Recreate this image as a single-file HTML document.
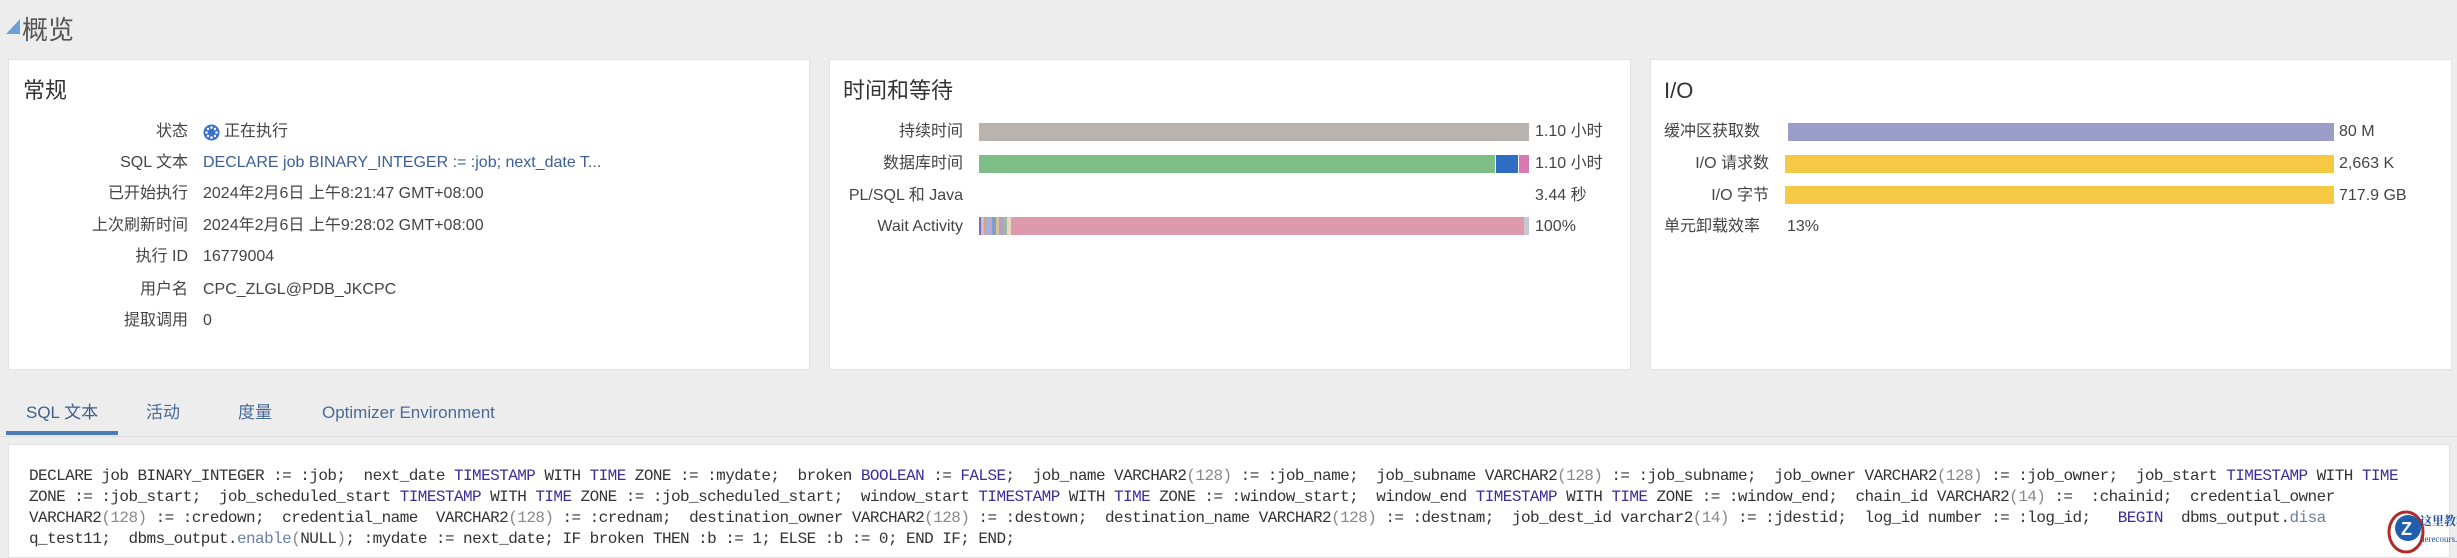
<!DOCTYPE html>
<html><head><meta charset="utf-8"><style>
*{margin:0;padding:0;box-sizing:border-box}
body{width:2457px;height:558px;background:#ededed;font-family:"Liberation Sans","Noto Sans CJK SC",sans-serif;color:#333;position:relative;overflow:hidden}
.a{position:absolute;white-space:nowrap}
.panel{position:absolute;top:59px;height:311px;background:#fff;border:1px solid #e2e2e2}
.t{font-size:22px;line-height:26px;color:#333}
.l{font-size:16px;line-height:20px;text-align:right;color:#444}
.v{font-size:16px;line-height:20px;color:#444}
.bar{position:absolute;height:18px}
.tab{font-size:17px;line-height:20px;top:403px}
.code{font-family:"Liberation Mono","Noto Sans CJK SC",monospace;font-size:16px;line-height:21px;color:#333;white-space:pre;letter-spacing:-0.56px}
.k{color:#3a2d9a}.n{color:#888}.f{color:#6a7fa8}
</style></head><body>
<div class="a" style="left:6px;top:19px;width:0;height:0;border-left:14px solid transparent;border-bottom:15px solid #6aa2d8"></div>
<div class="a" style="left:22px;top:10px;font-size:26px;color:#555">概览</div>

<div class="panel" style="left:8px;width:802px"></div>
<div class="panel" style="left:829px;width:802px"></div>
<div class="panel" style="left:1650px;width:802px"></div>

<div class="a t" style="left:23px;top:78px">常规</div>
<div class="a l" style="left:0;width:188px;top:122px">状态</div>
<div class="a l" style="left:0;width:188px;top:153px">SQL 文本</div>
<div class="a l" style="left:0;width:188px;top:184px">已开始执行</div>
<div class="a l" style="left:0;width:188px;top:216px">上次刷新时间</div>
<div class="a l" style="left:0;width:188px;top:247px">执行 ID</div>
<div class="a l" style="left:0;width:188px;top:280px">用户名</div>
<div class="a l" style="left:0;width:188px;top:311px">提取调用</div>
<svg class="a" style="left:203px;top:124px" width="17" height="17" viewBox="0 0 17 17"><circle cx="8.5" cy="8.5" r="8" fill="#3b6fc9"/><g fill="#fff"><circle cx="8.5" cy="3.5" r="1.3"/><circle cx="8.5" cy="13.5" r="1.3"/><circle cx="3.5" cy="8.5" r="1.3"/><circle cx="13.5" cy="8.5" r="1.3"/><circle cx="5" cy="5" r="1.2"/><circle cx="12" cy="5" r="1.2"/><circle cx="5" cy="12" r="1.2"/><circle cx="12" cy="12" r="1.2"/></g></svg>
<div class="a v" style="left:224px;top:122px">正在执行</div>
<div class="a v" style="left:203px;top:153px;color:#3c5f9a">DECLARE job BINARY_INTEGER := :job; next_date T...</div>
<div class="a v" style="left:203px;top:184px">2024年2月6日 上午8:21:47 GMT+08:00</div>
<div class="a v" style="left:203px;top:216px">2024年2月6日 上午9:28:02 GMT+08:00</div>
<div class="a v" style="left:203px;top:247px">16779004</div>
<div class="a v" style="left:203px;top:280px">CPC_ZLGL@PDB_JKCPC</div>
<div class="a v" style="left:203px;top:311px">0</div>

<div class="a t" style="left:843px;top:78px">时间和等待</div>
<div class="a l" style="left:800px;width:163px;top:122px">持续时间</div>
<div class="a l" style="left:800px;width:163px;top:154px">数据库时间</div>
<div class="a l" style="left:800px;width:163px;top:186px">PL/SQL 和 Java</div>
<div class="a l" style="left:800px;width:163px;top:217px">Wait Activity</div>
<div class="bar" style="left:979px;width:550px;top:123px;background:#b9b3af"></div>
<div class="bar" style="left:979px;width:516px;top:155px;background:#7fbf87"></div>
<div class="bar" style="left:1496px;width:22px;top:155px;background:#2f6dc5"></div>
<div class="bar" style="left:1519px;width:10px;top:155px;background:#d87ab2"></div>
<div class="bar" style="left:979px;width:550px;top:217px;background:linear-gradient(90deg,#7a6fb0 0 2px,#c9b9e0 2px 5px,#e0a070 5px 7px,#9fb5d8 7px 10px,#c8a0c8 10px 13px,#7aa0d0 13px 17px,#d8c090 17px 20px,#b0a0c8 20px 24px,#a0b8a0 24px 28px,#e8d8c0 28px 32px,#dd9aac 32px 545px,#c8c8d0 545px)"></div>
<div class="a v" style="left:1535px;top:122px">1.10 小时</div>
<div class="a v" style="left:1535px;top:154px">1.10 小时</div>
<div class="a v" style="left:1535px;top:186px">3.44 秒</div>
<div class="a v" style="left:1535px;top:217px">100%</div>

<div class="a t" style="left:1664px;top:78px">I/O</div>
<div class="a v" style="left:1664px;top:122px">缓冲区获取数</div>
<div class="a l" style="left:1600px;width:169px;top:154px">I/O 请求数</div>
<div class="a l" style="left:1600px;width:169px;top:186px">I/O 字节</div>
<div class="a v" style="left:1664px;top:217px">单元卸载效率</div>
<div class="bar" style="left:1788px;width:546px;top:123px;background:#9b9dc9"></div>
<div class="bar" style="left:1785px;width:549px;top:155px;background:#f6c944"></div>
<div class="bar" style="left:1785px;width:549px;top:186px;background:#f6c944"></div>
<div class="a v" style="left:2339px;top:122px">80 M</div>
<div class="a v" style="left:2339px;top:154px">2,663 K</div>
<div class="a v" style="left:2339px;top:186px">717.9 GB</div>
<div class="a v" style="left:1787px;top:217px">13%</div>

<div class="a tab" style="left:26px;color:#3d5f8e">SQL 文本</div>
<div class="a tab" style="left:146px;color:#4a6a98">活动</div>
<div class="a tab" style="left:238px;color:#4a6a98">度量</div>
<div class="a tab" style="left:322px;color:#4a6a98">Optimizer Environment</div>
<div class="a" style="left:0;top:436px;width:2457px;height:1px;background:#dcdcdc"></div>
<div class="a" style="left:6px;top:431px;width:112px;height:4px;background:#4a7ab8"></div>
<div class="a" style="left:8px;top:444px;width:2442px;height:114px;background:#fff;border:1px solid #e2e2e2"></div>

<div class="a code" style="left:29px;top:466px">DECLARE job BINARY_INTEGER := :job;  next_date <span class="k">TIMESTAMP</span> WITH <span class="k">TIME</span> ZONE := :mydate;  broken <span class="k">BOOLEAN</span> := <span class="k">FALSE</span>;  job_name VARCHAR2<span class="n">(128)</span> := :job_name;  job_subname VARCHAR2<span class="n">(128)</span> := :job_subname;  job_owner VARCHAR2<span class="n">(128)</span> := :job_owner;  job_start <span class="k">TIMESTAMP</span> WITH <span class="k">TIME</span>
ZONE := :job_start;  job_scheduled_start <span class="k">TIMESTAMP</span> WITH <span class="k">TIME</span> ZONE := :job_scheduled_start;  window_start <span class="k">TIMESTAMP</span> WITH <span class="k">TIME</span> ZONE := :window_start;  window_end <span class="k">TIMESTAMP</span> WITH <span class="k">TIME</span> ZONE := :window_end;  chain_id VARCHAR2<span class="n">(14)</span> :=  :chainid;  credential_owner
VARCHAR2<span class="n">(128)</span> := :credown;  credential_name  VARCHAR2<span class="n">(128)</span> := :crednam;  destination_owner VARCHAR2<span class="n">(128)</span> := :destown;  destination_name VARCHAR2<span class="n">(128)</span> := :destnam;  job_dest_id varchar2<span class="n">(14)</span> := :jdestid;  log_id number := :log_id;   <span class="k">BEGIN</span>  dbms_output.<span class="f">disa</span>
q_test11;  dbms_output.<span class="f">enable</span><span class="n">(</span>NULL<span class="n">)</span>; :mydate := next_date; IF broken THEN :b := 1; ELSE :b := 0; END IF; END;</div>

<svg class="a" style="left:2386px;top:508px" width="40" height="48" viewBox="0 0 40 48"><ellipse cx="20" cy="24" rx="17" ry="20" fill="#fff" stroke="#b02a2a" stroke-width="3"/><circle cx="22" cy="20" r="13" fill="#1f5fb0"/><text x="15" y="27" font-family="Liberation Sans" font-weight="bold" font-size="18" fill="#fff">Z</text></svg>
<div class="a" style="left:2420px;top:512px;font-size:12px;font-weight:bold;color:#1f4f9a;font-family:'Liberation Serif','Noto Serif CJK SC',serif">这里教程网</div>
<div class="a" style="left:2420px;top:534px;font-size:9px;color:#1f4f9a;font-family:'Liberation Serif',serif">herecours.com</div>
</body></html>
